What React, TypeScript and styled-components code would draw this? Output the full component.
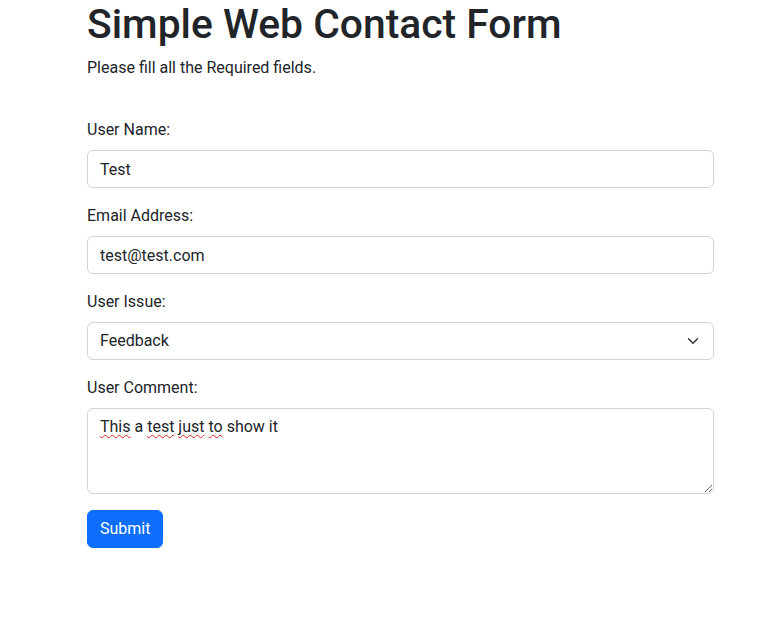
import React from "react";
import styled, { createGlobalStyle } from "styled-components";

const Global = createGlobalStyle`
  * { box-sizing: border-box; }
  body {
    margin: 0;
    background: #fff;
    color: #212529;
    font-family: Roboto, "Noto Sans", sans-serif;
    font-size: 16px;
    line-height: 1.5;
  }
`;

const Page = styled.main`
  width: 627px;
  margin-left: 87px;
`;

const Title = styled.h1`
  margin: 0 0 8px;
  font-size: 40.8px;
  font-weight: 500;
  line-height: 48px;
`;

const Lead = styled.p`
  margin: 0 0 38px;
  font-size: 16px;
`;

const Form = styled.form`
  display: flex;
  flex-direction: column;
`;

const Field = styled.div`
  display: flex;
  flex-direction: column;
  margin-bottom: 16px;
`;

const Label = styled.label`
  font-size: 16px;
  line-height: 24px;
  margin-bottom: 8px;
`;

const controlBase = `
  display: block;
  width: 100%;
  padding: 6px 12px;
  font-family: inherit;
  font-size: 16px;
  line-height: 24px;
  color: #212529;
  background-color: #fff;
  border: 1px solid #ced4da;
  border-radius: 6px;
  outline: none;
`;

const Input = styled.input`
  ${controlBase}
  height: 38px;
`;

const Select = styled.select`
  ${controlBase}
  height: 38px;
  appearance: none;
  padding-right: 36px;
  background-image: url("data:image/svg+xml,%3csvg xmlns='http://www.w3.org/2000/svg' viewBox='0 0 16 16'%3e%3cpath fill='none' stroke='%23343a40' stroke-linecap='round' stroke-linejoin='round' stroke-width='2' d='m2 5 6 6 6-6'/%3e%3c/svg%3e");
  background-repeat: no-repeat;
  background-position: right 12px center;
  background-size: 16px 12px;
`;

const TextArea = styled.div`
  ${controlBase}
  height: 86px;
  overflow: auto;
  resize: vertical;
  white-space: pre-wrap;
`;

const Misspelled = styled.span`
  text-decoration: underline wavy #e02020;
  text-decoration-thickness: 1px;
  text-underline-offset: 2px;
  text-decoration-skip-ink: none;
`;

const SubmitButton = styled.button`
  align-self: flex-start;
  height: 38px;
  padding: 6px 12px;
  font-family: inherit;
  font-size: 16px;
  line-height: 24px;
  color: #fff;
  background-color: #0d6efd;
  border: 1px solid #0d6efd;
  border-radius: 6px;
  cursor: pointer;
`;

export default function App() {
  return (
    <>
      <Global />
      <Page>
        <Title>Simple Web Contact Form</Title>
        <Lead>Please fill all the Required fields.</Lead>
        <Form onSubmit={(e) => e.preventDefault()}>
          <Field>
            <Label htmlFor="name">User Name:</Label>
            <Input id="name" defaultValue="Test" />
          </Field>
          <Field>
            <Label htmlFor="email">Email Address:</Label>
            <Input id="email" type="email" defaultValue="test@test.com" />
          </Field>
          <Field>
            <Label htmlFor="issue">User Issue:</Label>
            <Select id="issue" defaultValue="Feedback">
              <option>Feedback</option>
              <option>Bug</option>
              <option>Other</option>
            </Select>
          </Field>
          <Field>
            <Label>User Comment:</Label>
            <TextArea>
              <Misspelled>This</Misspelled> a <Misspelled>test</Misspelled>{" "}
              <Misspelled>just</Misspelled> <Misspelled>to</Misspelled> show it
            </TextArea>
          </Field>
          <SubmitButton type="submit">Submit</SubmitButton>
        </Form>
      </Page>
    </>
  );
}
